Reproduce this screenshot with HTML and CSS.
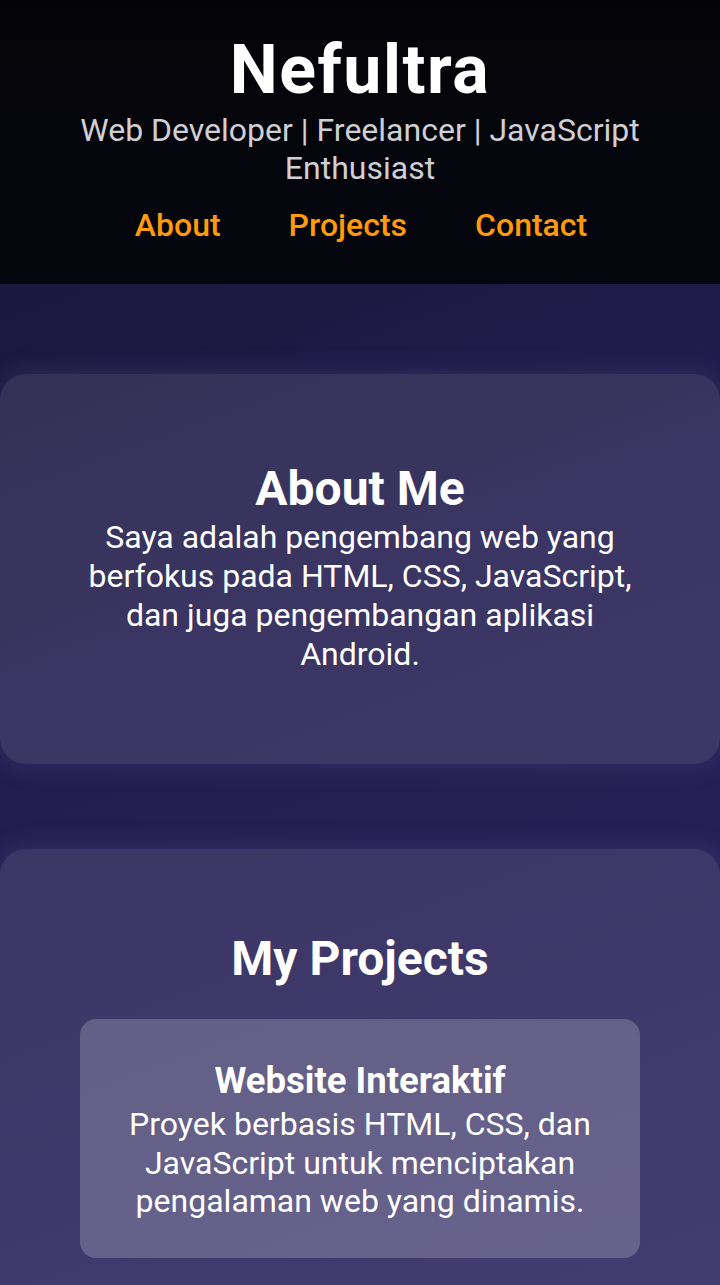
FILE: index.html
```html
<!DOCTYPE html>
<html lang="id">
<head>
<meta charset="utf-8">
<title>Nefultra</title>
<link rel="stylesheet" href="styles.css">
</head>
<body>
<header class="site-header">
  <h1 class="brand">Nefultra</h1>
  <p class="tagline">Web Developer | Freelancer | JavaScript Enthusiast</p>
  <nav class="nav">
    <a href="#about">About</a>
    <a href="#projects">Projects</a>
    <a href="#contact">Contact</a>
  </nav>
</header>
<main class="content">
  <section class="card" id="about">
    <h2 class="card-title">About Me</h2>
    <p class="card-text">Saya adalah pengembang web yang berfokus pada HTML, CSS, JavaScript, dan juga pengembangan aplikasi Android.</p>
  </section>
  <section class="card card-projects" id="projects">
    <h2 class="card-title">My Projects</h2>
    <div class="project">
      <h3 class="project-title">Website Interaktif</h3>
      <p class="project-text">Proyek berbasis HTML, CSS, dan JavaScript untuk menciptakan pengalaman web yang dinamis.</p>
    </div>
  </section>
</main>
</body>
</html>
```
FILE: styles.css
```css
* { box-sizing: border-box; }
html, body { margin: 0; padding: 0; }
body {
  font-family: Roboto, "Noto Sans", sans-serif;
  color: #fff;
  background: linear-gradient(160deg, #171332 0%, #221d4f 45%, #2c2460 100%);
  min-height: 1285px;
  text-align: center;
}
.site-header {
  background: linear-gradient(180deg, #040408 0%, #05050f 100%);
  height: 284px;
  padding-top: 30px;
}
.brand {
  margin: 0;
  font-size: 68px;
  line-height: 80px;
  font-weight: 700;
  letter-spacing: 1.5px;
}
.tagline {
  margin: 1px 70px 0;
  font-size: 32px;
  line-height: 38px;
  color: #cfcfd4;
}
.nav {
  display: flex;
  justify-content: center;
  gap: 68px;
  margin-top: 20px;
  padding-left: 2px;
}
.nav a {
  color: #ff9a0a;
  text-decoration: none;
  font-size: 32px;
  line-height: 36px;
  font-weight: 500;
}
.content {
  display: flex;
  flex-direction: column;
  gap: 85px;
  padding: 90px 0 0;
}
.card {
  background: rgba(255, 255, 255, 0.11);
  border-radius: 26px;
  padding: 88px 80px 90px;
  box-shadow: 0 0 24px 4px rgba(120, 110, 170, 0.18);
}
.card-title {
  margin: 0;
  font-size: 48px;
  line-height: 54px;
  font-weight: 700;
}
.card-text {
  margin: 2px 0 0;
  font-size: 32px;
  line-height: 39px;
}
.card-projects {
  padding-top: 83px;
  padding-bottom: 60px;
}
.project {
  margin-top: 33px;
  background: rgba(255, 255, 255, 0.2);
  border-radius: 16px;
  padding: 40px 20px 37px;
}
.project-title {
  margin: 0 0 3px;
  font-size: 36.5px;
  line-height: 43px;
  font-weight: 700;
}
.project-text {
  margin: 0;
  font-size: 32px;
  line-height: 38.5px;
}
```
